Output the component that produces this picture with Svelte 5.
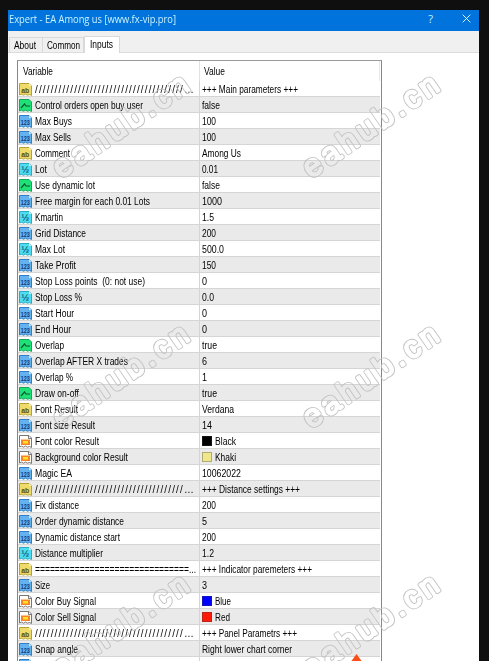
<script lang="ts">
	type Kind = 'string' | 'bool' | 'int' | 'double' | 'color';

	interface Field {
		kind: Kind;
		label: string;
		labelWidth: number;
		value: string;
		valueWidth: number;
		swatch?: string;
	}

	const slashes = '/'.repeat(38) + '…';
	const equals = '='.repeat(31) + '...';

	function field(
		kind: Kind,
		label: string,
		labelWidth: number,
		value: string,
		valueWidth: number,
		swatch?: string
	): Field {
		return { kind, label, labelWidth, value, valueWidth, swatch };
	}

	const fields: Field[] = [
		field('string', slashes, 160, '+++ Main parameters +++', 96),
		field('bool', 'Control orders open buy user', 108, 'false', 18),
		field('int', 'Max Buys', 37, '100', 14),
		field('int', 'Max Sells', 36, '100', 14),
		field('string', 'Comment', 35, 'Among Us', 39),
		field('double', 'Lot', 12, '0.01', 16),
		field('bool', 'Use dynamic lot', 60, 'false', 18),
		field('int', 'Free margin for each 0.01 Lots', 115, '1000', 20),
		field('double', 'Kmartin', 28, '1.5', 12),
		field('int', 'Grid Distance', 51, '200', 14),
		field('double', 'Max Lot', 30, '500.0', 22),
		field('int', 'Take Profit', 41, '150', 14),
		field('int', 'Stop Loss points  (0: not use)', 110, '0', 5),
		field('double', 'Stop Loss %', 47, '0.0', 12),
		field('int', 'Start Hour', 39, '0', 5),
		field('int', 'End Hour', 36, '0', 5),
		field('bool', 'Overlap', 29, 'true', 15),
		field('int', 'Overlap AFTER X trades', 93, '6', 5),
		field('int', 'Overlap %', 38, '1', 5),
		field('bool', 'Draw on-off', 44, 'true', 15),
		field('string', 'Font Result', 43, 'Verdana', 32),
		field('int', 'Font size Result', 60, '14', 10),
		field('color', 'Font color Result', 64, 'Black', 21, '#000000'),
		field('color', 'Background color Result', 93, 'Khaki', 21, '#f0e68c'),
		field('int', 'Magic EA', 37, '10062022', 39),
		field('string', slashes, 160, '+++ Distance settings +++', 98),
		field('int', 'Fix distance', 44, '200', 14),
		field('int', 'Order dynamic distance', 89, '5', 5),
		field('int', 'Dynamic distance start', 85, '200', 14),
		field('double', 'Distance multiplier', 68, '1.2', 12),
		field('string', equals, 161, '+++ Indicator paremeters +++', 110),
		field('int', 'Size', 15, '3', 5),
		field('color', 'Color Buy Signal', 61, 'Blue', 16, '#0000ff'),
		field('color', 'Color Sell Signal', 61, 'Red', 15, '#ff1a08'),
		field('string', slashes, 160, '+++ Panel Parametrs +++', 95),
		field('int', 'Snap angle', 43, 'Right lower chart corner', 90)
	];

	const marks = [0, 1, 2].flatMap((row) => [0, 1].map((col) => ({ x: 61 + col * 250, y: 179 + row * 250 })));

	// squeeze a caption to the width of the dialog's narrow UI font
	function fit(node: HTMLElement, width: number) {
		const natural = node.getBoundingClientRect().width;
		if (natural > 0) node.style.transform = `scaleX(${width / natural})`;
	}
</script>

{#snippet icon(kind: Kind, blank = false)}
	<svg class="icon {kind}" viewBox="0 0 13 13">
		<path class="page" d="M.5.5h9.5l2.5 2.5v9.5l-2-1-2 .7-2-1-2 1-2-1-2 .8z" />
		{#if blank}
			<path class="corner" d="M10 .5v2.5h2.5z" />
		{:else if kind === 'bool'}
			<path class="wave" d="M2 9l4-4.5M5.5 5l1.5 2h4" />
		{:else if kind === 'color'}
			<path class="fold" d="M9.5.5v3h3" />
			<rect class="outer" x="2" y="4.5" width="9" height="5.5" />
			<rect class="inner" x="4" y="6" width="5" height="2.5" />
		{:else}
			<path class="corner" d="M10 .5v2.5h2.5z" />
			<text x="6.3" y="9.5" textLength={kind === 'int' ? 9 : 8} lengthAdjust="spacingAndGlyphs">
				{kind === 'string' ? 'ab' : kind === 'int' ? '123' : '½'}
			</text>
		{/if}
	</svg>
{/snippet}

<div class="screen">
	<div class="dialog">
		<header class="titlebar">
			<span class="title" use:fit={167}>Expert - EA Among us [www.fx-vip.pro]</span>
			<span class="help">?</span>
			<svg class="close" viewBox="0 0 9 9"><path d="M.7.7l7.6 7.6M8.3.7L.7 8.3" /></svg>
		</header>

		<nav class="tabs">
			<div class="tab about"><span use:fit={22}>About</span></div>
			<div class="tab common"><span use:fit={33}>Common</span></div>
			<div class="tab active"><span use:fit={23}>Inputs</span></div>
		</nav>

		<main class="body">
			<div class="table">
				<div class="head">
					<div class="head-name"><span use:fit={30}>Variable</span></div>
					<div class="head-value"><span use:fit={21}>Value</span></div>
				</div>
				{#each fields as f}
					<div class="row">
						<div class="name">
							{@render icon(f.kind)}
							<span class:slashes={f.label.startsWith('/')} use:fit={f.labelWidth}>{f.label}</span>
						</div>
						<div class="value">
							{#if f.swatch}
								<i class="swatch" style="background: {f.swatch}"></i>
							{/if}
							<span use:fit={f.valueWidth}>{f.value}</span>
						</div>
					</div>
				{/each}
				<div class="row">
					<div class="name">{@render icon('int', true)}</div>
				</div>
			</div>
		</main>
	</div>

	<svg class="overlay" viewBox="0 0 489 661">
		<defs>
			<mask id="outline" maskUnits="userSpaceOnUse" x="0" y="0" width="489" height="661">
				{#each marks as m}
					<g transform="translate({m.x} {m.y}) rotate(-34.5)">
						<text class="mark thick" textLength="158">eahub.cn</text>
						<text class="mark thin" textLength="158">eahub.cn</text>
					</g>
				{/each}
			</mask>
		</defs>
		<rect width="489" height="661" fill="#c0c0c0" mask="url(#outline)" />
		<path d="M356.5 654l6.5 9h-13z" fill="#fb4d19" />
	</svg>
</div>

<style>
	:global(body) {
		margin: 0;
		background: #0f0f0f;
		overflow: hidden;
	}

	.screen {
		position: relative;
		box-sizing: border-box;
		width: 489px;
		height: 661px;
		padding: 10px 10px 0 8px;
		overflow: hidden;
		background: #0f0f0f;
		color: #000;
		font-family: 'Liberation Sans', Arial, sans-serif;
		font-size: 10px;
	}

	.dialog {
		height: 651px;
		background: #fff;
		overflow: hidden;
	}

	span {
		display: inline-block;
		flex: none;
		white-space: pre;
		transform-origin: 0 50%;
	}

	.titlebar {
		display: flex;
		align-items: center;
		height: 21px;
		padding: 0 8px 0 1px;
		box-sizing: border-box;
		background: #0074dc;
		color: #c9f2ff;
		font-family: 'Open Sans', sans-serif;
		font-size: 10.5px;
		line-height: 18px;
	}

	.title {
		margin-top: -3px;
	}

	.help {
		margin: -4px 29px 0 auto;
		font-size: 11px;
	}

	.close {
		width: 9px;
		height: 9px;
		margin-top: -5px;
		fill: none;
		stroke: #d5f7ff;
		stroke-width: 1;
	}

	.tabs {
		display: flex;
		align-items: flex-end;
		height: 22px;
		box-sizing: border-box;
		background: #f0f0f0;
		border-bottom: 1px solid #dcdcdc;
	}

	.tab {
		box-sizing: border-box;
		height: 15px;
		padding-left: 4px;
		border: 1px solid #d9d9d9;
		border-bottom: 0;
		line-height: 16px;
		overflow: hidden;
	}

	.about {
		width: 34px;
		margin-left: 1px;
	}

	.common {
		width: 41px;
		border-left: 0;
	}

	.active {
		width: 36px;
		height: 17px;
		padding-left: 5px;
		margin-bottom: -1px;
		background: #fff;
	}

	.body {
		padding: 7px 0 0 9px;
	}

	.table {
		box-sizing: border-box;
		width: 365px;
		border: 1px solid #85878c;
		border-top-color: #9a9a9a;
		border-bottom: 0;
	}

	.head {
		display: flex;
		height: 20px;
		line-height: 22px;
		margin-right: 1px;
		border-right: 1px solid #e8e8e8;
		box-sizing: border-box;
	}

	.head-name {
		width: 182px;
		padding-left: 5px;
		box-sizing: border-box;
		border-right: 1px solid #e2e2e2;
	}

	.head-value {
		padding-left: 4px;
	}

	.row {
		display: flex;
		height: 16px;
		box-sizing: border-box;
		margin-right: 1px;
		border-bottom: 1px solid #d5d5d5;
		line-height: 17px;
	}

	.row:nth-child(odd) {
		background: #eaeaea;
	}

	.name {
		display: flex;
		align-items: center;
		width: 182px;
		height: 16px;
		box-sizing: border-box;
		padding-left: 1px;
		gap: 3px;
		border-right: 1px solid #d5d5d5;
		overflow: hidden;
	}

	.value {
		display: flex;
		align-items: center;
		height: 16px;
		padding-left: 2px;
	}

	.slashes {
		letter-spacing: 1.2px;
	}

	.swatch {
		width: 8px;
		height: 8px;
		margin-right: 3px;
		border: 1px solid rgba(60, 60, 60, 0.35);
	}

	.icon {
		flex: none;
		width: 13px;
		height: 13px;
	}

	.page {
		stroke-width: 1;
	}

	.icon text {
		font-size: 8px;
		font-weight: bold;
		text-anchor: middle;
	}

	.string .page {
		fill: #efdb67;
		stroke: #b9a036;
	}

	.string text {
		fill: #5e4a0a;
	}

	.int .page {
		fill: #64b2f0;
		stroke: #317fc2;
	}

	.int text {
		fill: #0c3d75;
		font-size: 7px;
	}

	.double .page {
		fill: #4fdcf0;
		stroke: #28adc6;
	}

	.double text {
		fill: #0b6482;
		font-size: 9px;
	}

	.bool .page {
		fill: #20e078;
		stroke: #14a857;
	}

	.wave {
		fill: none;
		stroke: #07572a;
		stroke-width: 1.2;
	}

	.corner {
		fill: #fff;
		fill-opacity: 0.7;
	}

	.color .page {
		fill: #fff;
		stroke: #777;
	}

	.fold {
		fill: none;
		stroke: #777;
	}

	.outer {
		fill: #f8841f;
	}

	.inner {
		fill: #ffdf2c;
	}

	.overlay {
		position: absolute;
		inset: 0;
		width: 489px;
		height: 661px;
		pointer-events: none;
	}

	.mark {
		font-size: 31px;
		stroke-linejoin: round;
	}

	.thick {
		fill: #fff;
		stroke: #fff;
		stroke-width: 3.8;
	}

	.thin {
		fill: #000;
		stroke: #000;
		stroke-width: 2.2;
	}
</style>
